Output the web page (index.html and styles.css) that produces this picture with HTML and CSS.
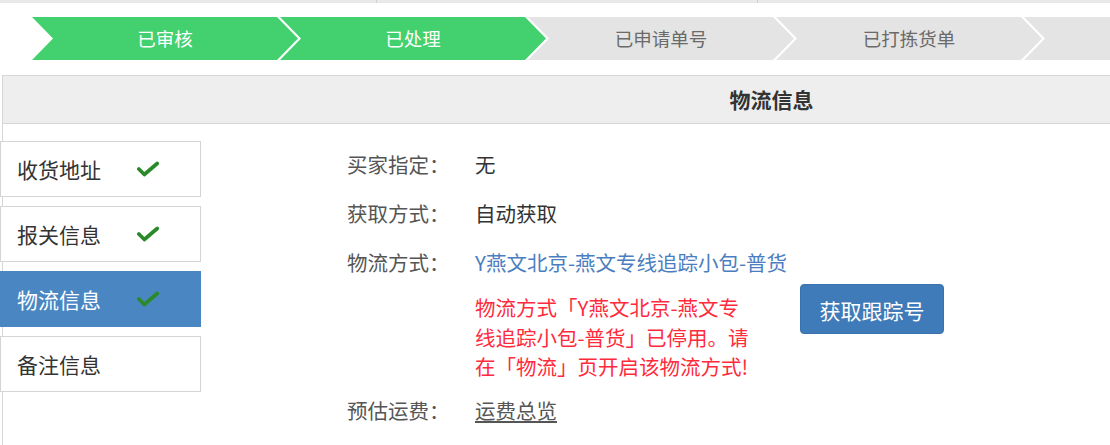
FILE: index.html
```html
<!DOCTYPE html>
<html lang="zh-CN">
<head>
  <meta charset="UTF-8">
  <meta name="viewport" content="width=device-width, initial-scale=1.0">
  <title>订单详情 - 物流信息</title>
  <link rel="stylesheet" href="styles.css">
</head>
<body>
  <!-- top strip -->
  <div class="topbar">
    <div class="topbar-cell wide"></div>
    <div class="topbar-cell mid"></div>
    <div class="topbar-cell"></div>
  </div>

  <!-- order progress -->
  <div class="steps">
    <div class="step done">已审核</div>
    <div class="step done">已处理</div>
    <div class="step">已申请单号</div>
    <div class="step">已打拣货单</div>
    <div class="step"></div>
  </div>

  <div class="panel">
    <div class="panel-head">物流信息</div>
    <div class="panel-body">
      <!-- side tabs -->
      <ul class="tabs">
        <li class="tab">收货地址 <svg class="check" viewBox="0 0 24 16"><polyline points="2,8 8,14 22,2" /></svg></li>
        <li class="tab">报关信息 <svg class="check" viewBox="0 0 24 16"><polyline points="2,8 8,14 22,2" /></svg></li>
        <li class="tab active">物流信息 <svg class="check" viewBox="0 0 24 16"><polyline points="2,8 8,14 22,2" /></svg></li>
        <li class="tab">备注信息</li>
      </ul>

      <!-- logistics form -->
      <div class="info grid">
        <div class="label">买家指定：</div>
        <div class="value">无</div>
        <div class="label">获取方式：</div>
        <div class="value">自动获取</div>
        <div class="label">物流方式：</div>
        <div class="value link">Y燕文北京-燕文专线追踪小包-普货</div>
        <div class="label"></div>
        <div class="value notice">
          <p class="warn">物流方式「Y燕文北京-燕文专线追踪小包-普货」已停用。请在「物流」页开启该物流方式!</p>
          <button type="button" class="btn">获取跟踪号</button>
        </div>
        <div class="label">预估运费：</div>
        <div class="value"><a class="plain" href="#">运费总览</a></div>
      </div>
    </div>
  </div>
</body>
</html>
```

FILE: styles.css
```css
html {
  font-family: "Noto Sans CJK SC", "Noto Sans", sans-serif;
}
body {
  margin: 0;
  padding: 0;
  width: 1110px;
  height: 445px;
  overflow: hidden;
  background: #fff;
  color: #333;
}
.topbar {
  display: flex;
  height: 3px;
  background: #e9e9e9;
}
.topbar-cell {
  flex: 1;
  border-right: 1px solid #d0d0d0;
}
.topbar-cell.wide {
  flex: 0 0 376px;
}
.topbar-cell.mid {
  flex: 0 0 380px;
}
.topbar-cell:last-child {
  border-right: 0;
}

/* steps */
.steps {
  display: flex;
  margin: 14px 0 15px 32px;
  height: 43px;
  overflow: hidden;
}
.step {
  flex: 0 0 266px;
  margin-right: -18px;
  height: 43px;
  line-height: 43px;
  text-align: center;
  font-size: 18.5px;
  color: #6a6a6a;
  background: #e4e4e4;
  clip-path: polygon(0 0, 245px 0, 266px 50%, 245px 100%, 0 100%, 21px 50%);
}
.step.done {
  background: #43d16f;
  color: #fff;
}

/* panel */
.panel {
  margin-left: 2px;
  border-left: 1px solid #d6d6d6;
}
.panel-head {
  height: 47px;
  line-height: 47px;
  padding-left: 430px;
  background: #eeeeee;
  border-top: 1px solid #d6d6d6;
  border-bottom: 1px solid #d6d6d6;
  text-align: center;
  font-size: 21px;
  font-weight: bold;
  color: #333;
}
.panel-body {
  display: flex;
  height: 330px;
}
.tabs {
  list-style: none;
  margin: 17px 0 0 -3px;
  padding: 0;
  width: 201px;
}
.tab {
  display: flex;
  align-items: center;
  height: 54px;
  margin-bottom: 9px;
  padding-left: 16px;
  border: 1px solid #d4d4d4;
  background: #fff;
  font-size: 21px;
  color: #333;
}
.tab.active {
  background: #4a87c2;
  border-color: #4a87c2;
  color: #fff;
}
.check {
  width: 22px;
  height: 16px;
  margin-left: 36px;
  fill: none;
  stroke: #2a8a2a;
  stroke-width: 4;
  stroke-linecap: round;
  stroke-linejoin: round;
}

/* info grid */
.grid {
  display: grid;
  grid-template-columns: 128px auto;
  grid-template-rows: auto;
}
.info {
  padding: 16px 0 0 146px;
  font-size: 20.5px;
  align-content: start;
}
.label {
  line-height: 49px;
  color: #555;
}
.value {
  line-height: 49px;
  color: #333;
}
.value.link {
  color: #4a7ec0;
}
.notice {
  display: flex;
  align-items: flex-start;
  padding-top: 1px;
  margin-bottom: 4px;
}
.warn {
  margin: 5px 0 0;
  width: 284px;
  line-height: 29.5px;
  color: #ff2a3c;
}
.btn {
  margin: -4px 0 0 41px;
  width: 144px;
  height: 50px;
  border: 1px solid #3a72ad;
  border-radius: 4px;
  background: #3f7bb8;
  color: #fff;
  font: inherit;
  font-size: 21px;
  cursor: pointer;
}
.plain {
  color: #555;
  text-decoration: underline;
}
```
